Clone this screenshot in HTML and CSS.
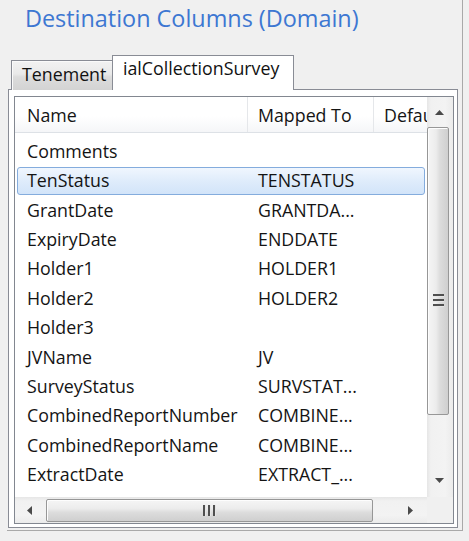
FILE: index.html
```html
<!DOCTYPE html>
<html>
<head>
<meta charset="utf-8">
<link rel="stylesheet" href="styles.css">
</head>
<body>
<div class="frame">
  <h1 class="title">Destination Columns (Domain)</h1>
  <div class="tabs">
    <div class="tab">Tenement</div>
    <div class="tab active">ialCollectionSurvey</div>
  </div>
  <div class="panel">
    <div class="list">
      <div class="view">
        <div class="head">
          <div class="hc c1">Name</div>
          <div class="hc c2">Mapped To</div>
          <div class="hc c3">Default</div>
        </div>
        <div class="rows">
          <div class="row"><span class="c1">Comments</span><span class="c2"></span></div>
          <div class="row sel"><span class="c1">TenStatus</span><span class="c2">TENSTATUS</span></div>
          <div class="row"><span class="c1">GrantDate</span><span class="c2">GRANTDA...</span></div>
          <div class="row"><span class="c1">ExpiryDate</span><span class="c2">ENDDATE</span></div>
          <div class="row"><span class="c1">Holder1</span><span class="c2">HOLDER1</span></div>
          <div class="row"><span class="c1">Holder2</span><span class="c2">HOLDER2</span></div>
          <div class="row"><span class="c1">Holder3</span><span class="c2"></span></div>
          <div class="row"><span class="c1">JVName</span><span class="c2">JV</span></div>
          <div class="row"><span class="c1">SurveyStatus</span><span class="c2">SURVSTAT...</span></div>
          <div class="row"><span class="c1">CombinedReportNumber</span><span class="c2">COMBINE...</span></div>
          <div class="row"><span class="c1">CombinedReportName</span><span class="c2">COMBINE...</span></div>
          <div class="row"><span class="c1">ExtractDate</span><span class="c2">EXTRACT_...</span></div>
        </div>
      </div>
      <div class="vscroll">
        <div class="btn up"><svg width="9" height="5" viewBox="0 0 9 5"><polygon points="0,5 4.5,0 9,5" fill="#4a4a4a"/></svg></div>
        <div class="vthumb"><div class="vgrip"><i></i><i></i><i></i></div></div>
        <div class="btn down"><svg width="9" height="5" viewBox="0 0 9 5"><polygon points="0,0 4.5,5 9,0" fill="#4a4a4a"/></svg></div>
      </div>
      <div class="hscroll">
        <div class="btn left"><svg width="5" height="9" viewBox="0 0 5 9"><polygon points="5,0 0,4.5 5,9" fill="#4a4a4a"/></svg></div>
        <div class="hthumb"><div class="hgrip"><i></i><i></i><i></i></div></div>
        <div class="btn right"><svg width="5" height="9" viewBox="0 0 5 9"><polygon points="0,0 5,4.5 0,9" fill="#4a4a4a"/></svg></div>
      </div>
      <div class="corner"></div>
    </div>
  </div>
</div>
</body>
</html>
```
FILE: styles.css
```css
html, body {
  margin: 0;
  padding: 0;
  background: #f0f0f0;
  font-family: "Open Sans", "Noto Sans", sans-serif;
  color: #141414;
}

.frame {
  margin-left: 7px;
  width: 456px;
  height: 531px;
  box-sizing: border-box;
  padding-left: 1px;
  border-right: 1px solid #a9a9a9;
  border-bottom: 1px solid #a9a9a9;
}

.title {
  margin: 0;
  height: 55px;
  box-sizing: border-box;
  padding: 3px 0 0 17px;
  font-size: 23.4px;
  line-height: 30px;
  font-weight: 400;
  color: #3d77d2;
  white-space: nowrap;
}

.tabs {
  display: flex;
  align-items: flex-end;
  height: 35px;
  margin: 0 0 -1px 3px;
  position: relative;
  z-index: 1;
}

.tab {
  height: 30px;
  width: 101px;
  box-sizing: border-box;
  border: 1px solid #898c95;
  border-bottom: 0;
  border-right: 0;
  padding-left: 10px;
  font-size: 17.8px;
  line-height: 26px;
  white-space: nowrap;
  background: linear-gradient(#f2f2f2, #e9e9e9 45%, #dcdcdc 55%, #d3d3d3);
  box-shadow: inset 1px 1px 0 #fafafa;
  color: #111;
}

.tab.active {
  height: 35px;
  width: 182px;
  border-right: 1px solid #898c95;
  background: #fff;
  box-shadow: none;
  line-height: 24px;
}

.panel {
  width: 450px;
  height: 439px;
  box-sizing: border-box;
  border: 1px solid #898c95;
  background: #fff;
  padding: 6px 3px 3px 5px;
}

.list {
  width: 440px;
  height: 428px;
  box-sizing: border-box;
  border: 1px solid #828790;
  display: grid;
  grid-template-columns: 412px 26px;
  grid-template-rows: 400px 26px;
  background: #fff;
}

.view {
  overflow: hidden;
  font-size: 17.8px;
}

.head {
  display: grid;
  grid-template-columns: 233px 126px 120px;
  height: 36px;
  box-sizing: border-box;
  border-bottom: 1px solid #dde1e6;
  background: linear-gradient(#ffffff, #ffffff 55%, #f5f6f8);
  white-space: nowrap;
}

.hc {
  padding-top: 2px;
  line-height: 33px;
  border-right: 1px solid #e5e7ea;
}

.head .c1 { padding-left: 12px; }
.head .c2 { padding-left: 10px; }
.head .c3 { padding-left: 10px; border-right: 0; }

.rows {
  padding-top: 4px;
}

.row {
  position: relative;
  display: grid;
  grid-template-columns: 233px 126px 1fr;
  height: 29.36px;
  line-height: 29.36px;
  white-space: nowrap;
}

.row span {
  position: relative;
  z-index: 1;
}

.row .c1 { padding-left: 12px; }
.row .c2 { padding-left: 10px; }

.row.sel::before {
  content: "";
  position: absolute;
  left: 2px;
  right: 2px;
  top: 1px;
  bottom: 1px;
  border: 1px solid #84acdd;
  border-radius: 3px;
  background: linear-gradient(#f0f6fe, #dfecfb 50%, #d2e4f9);
}

.vscroll {
  display: flex;
  flex-direction: column;
  background: linear-gradient(to right, #e6e6e6, #f1f1f1 15%, #f3f3f3 70%, #ebebeb);
}

.btn {
  display: flex;
  align-items: center;
  justify-content: center;
}

.btn svg { display: block; }

.btn.up {
  height: 28px;
  width: 24px;
  padding-top: 2px;
  box-sizing: border-box;
}

.btn.down {
  margin-top: auto;
  height: 30px;
  width: 24px;
  padding-bottom: 4px;
  box-sizing: border-box;
}

.vthumb {
  margin-top: 2px;
  width: 22px;
  height: 288px;
  box-sizing: border-box;
  border: 1px solid #979797;
  border-radius: 2px;
  background: linear-gradient(to right, #f5f5f5, #ececec 40%, #dcdcdc 60%, #cfcfcf);
  box-shadow: inset 1px 1px 0 #fdfdfd;
  position: relative;
}

.vgrip {
  position: absolute;
  left: 5px;
  top: 166px;
  width: 11px;
  display: flex;
  flex-direction: column;
  gap: 2px;
}

.vgrip i {
  display: block;
  height: 2px;
  background: #4f4f4f;
  border-bottom: 1px solid #e6e6e6;
}

.hscroll {
  display: flex;
  align-items: center;
  background: linear-gradient(#e6e6e6, #f1f1f1 15%, #f3f3f3 70%, #ebebeb);
}

.btn.left {
  width: 29px;
  height: 26px;
}

.btn.right {
  margin-left: auto;
  width: 31px;
  height: 26px;
  padding-right: 3px;
  box-sizing: border-box;
}

.hthumb {
  margin-left: 2px;
  width: 327px;
  height: 23px;
  box-sizing: border-box;
  border: 1px solid #979797;
  border-radius: 2px;
  background: linear-gradient(#f5f5f5, #ececec 40%, #dcdcdc 60%, #cfcfcf);
  box-shadow: inset 1px 1px 0 #fdfdfd;
  display: flex;
  align-items: center;
  justify-content: center;
}

.hgrip {
  display: flex;
  gap: 2px;
  height: 11px;
}

.hgrip i {
  display: block;
  width: 2px;
  height: 11px;
  background: #4f4f4f;
  border-right: 1px solid #e6e6e6;
}

.corner {
  background: #f0f0f0;
}
```
